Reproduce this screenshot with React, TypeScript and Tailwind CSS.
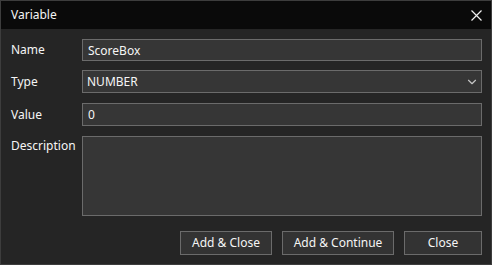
import { ChevronDown } from "lucide-react";

const font = { fontFamily: '"Segoe UI", "Noto Sans", "Liberation Sans", sans-serif' };

function Field({ label, children, top }: { label: string; children: React.ReactNode; top?: boolean }) {
  return (
    <div className={`flex ${top ? "items-start" : "items-center"}`}>
      <div className={`w-[71px] shrink-0 ${top ? "pt-[1px]" : ""}`}>{label}</div>
      {children}
    </div>
  );
}

export default function App() {
  return (
    <div
      className="w-[492px] h-[265px] border border-[#3d3d3d] bg-[#252525] text-[12px] text-[#f5f5f5] flex flex-col"
      style={font}
    >
      <div className="h-[28px] bg-[#0a0a0a] flex items-center justify-between pl-[10px] pr-[9px]">
        <span>Variable</span>
        <svg width="11" height="11" viewBox="0 0 11 11" className="mr-[0px]">
          <path d="M0.5 0.5L10.5 10.5M10.5 0.5L0.5 10.5" stroke="#f0f0f0" strokeWidth="1.2" />
        </svg>
      </div>
      <div className="flex-1 pt-[10px] pl-[10px] pr-[9px] flex flex-col">
        <div className="flex flex-col gap-[9px]">
          <Field label="Name">
            <input
              defaultValue="ScoreBox"
              className="flex-1 h-[22px] bg-[#363636] border border-[#6b6b6b] px-[5px] outline-none text-[#f5f5f5]"
            />
          </Field>
          <Field label="Type">
            <div className="flex-1 h-[23px] bg-[#363636] border border-[#6b6b6b] pl-[4px] pr-[2px] flex items-center justify-between">
              <span>NUMBER</span>
              <ChevronDown className="w-[14px] h-[14px] text-[#c4c4c4]" strokeWidth={2} />
            </div>
          </Field>
          <div className="mt-[1px]">
            <Field label="Value">
              <input
                defaultValue="0"
                className="flex-1 h-[23px] bg-[#363636] border border-[#6b6b6b] px-[5px] outline-none text-[#f5f5f5]"
              />
            </Field>
          </div>
          <div className="mt-[1px]">
            <Field label="Description" top>
              <textarea className="flex-1 h-[80px] bg-[#363636] border border-[#6b6b6b] resize-none outline-none" />
            </Field>
          </div>
        </div>
        <div className="flex justify-end gap-[10px] mt-[15px]">
          <button className="w-[92px] h-[24px] bg-[#333333] border border-[#6b6b6b]">Add &amp; Close</button>
          <button className="w-[112px] h-[24px] bg-[#333333] border border-[#6b6b6b]">Add &amp; Continue</button>
          <button className="w-[78px] h-[24px] bg-[#333333] border border-[#6b6b6b]">Close</button>
        </div>
      </div>
    </div>
  );
}
